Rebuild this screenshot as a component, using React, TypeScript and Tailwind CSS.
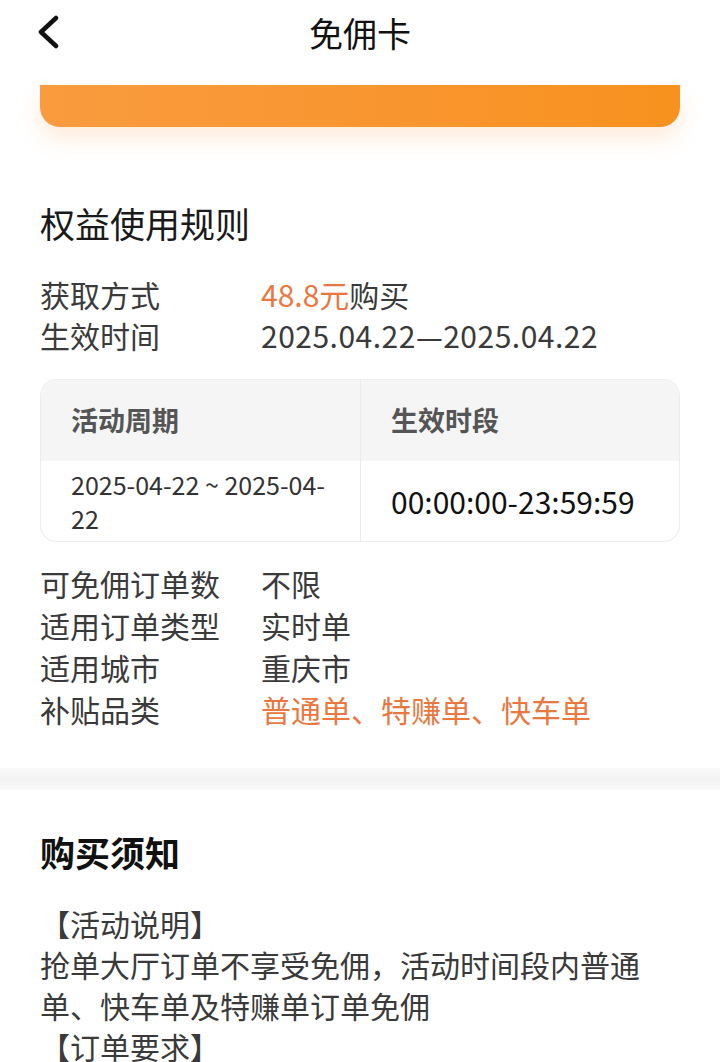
const font = { fontFamily: '"Noto Sans CJK SC", "Noto Sans", sans-serif' };

const rules: [string, string, boolean?][] = [
  ["可免佣订单数", "不限"],
  ["适用订单类型", "实时单"],
  ["适用城市", "重庆市"],
  ["补贴品类", "普通单、特赚单、快车单", true],
];

function BackIcon() {
  return (
    <svg width="28" height="34" viewBox="0 0 28 34" fill="none">
      <polyline
        points="20,3 5,17 20,31"
        stroke="#111"
        strokeWidth="4.5"
        strokeLinecap="round"
        strokeLinejoin="round"
      />
    </svg>
  );
}

export default function App() {
  return (
    <div className="w-[720px] h-[1062px] bg-white overflow-hidden" style={font}>
      {/* header */}
      <div className="relative h-[85px] flex justify-center">
        <div className="absolute left-[36px] top-[15px]">
          <BackIcon />
        </div>
        <h1 className="mt-[10px] text-[34px] leading-[46px] text-[#111]">免佣卡</h1>
      </div>

      <div className="px-10">
        <div className="h-[42px] rounded-b-[20px] bg-gradient-to-r from-[#f99b3e] to-[#f8911d] shadow-[0_12px_22px_rgba(249,150,60,0.18)]" />

        <h2 className="mt-[71px] text-[35px] leading-[49px] text-[#1a1a1a]">权益使用规则</h2>

        <div className="mt-[27px] text-[30px] leading-[41px] text-[#3a3a3a]">
          <div className="flex">
            <span className="w-[221px]">获取方式</span>
            <span>
              <span className="text-[#e8783f]">48.8元</span>购买
            </span>
          </div>
          <div className="flex">
            <span className="w-[221px]">生效时间</span>
            <span className="tracking-[0.5px]">2025.04.22—2025.04.22</span>
          </div>
        </div>

        <div className="mt-[23px] border border-[#ececec] rounded-[16px] overflow-hidden grid grid-cols-[320px_1fr]">
          <div className="h-[81px] bg-[#f5f5f5] flex items-center px-[30px] text-[27px] font-bold text-[#555] border-r border-[#ebebeb]">
            活动周期
          </div>
          <div className="h-[81px] bg-[#f5f5f5] flex items-center px-[30px] text-[27px] font-bold text-[#555]">
            生效时段
          </div>
          <div className="h-[80px] flex items-center pl-[30px] pr-[6px] text-[25px] leading-[34px] text-[#333] border-r border-[#ebebeb]">
            <span className="whitespace-nowrap">
              2025-04-22 ~ 2025-04-
              <br />
              22
            </span>
          </div>
          <div className="h-[80px] flex items-center px-[30px] text-[30px] text-[#111]">
            00:00:00-23:59:59
          </div>
        </div>

        <div className="mt-[20px] text-[30px] leading-[42px] text-[#3a3a3a]">
          {rules.map(([k, v, hl]) => (
            <div key={k} className="flex">
              <span className="w-[221px]">{k}</span>
              <span className={hl ? "text-[#e8783f]" : ""}>{v}</span>
            </div>
          ))}
        </div>
      </div>

      <div className="mt-[38px] h-[22px] bg-gradient-to-b from-[#fafafa] via-[#f3f3f3] to-[#fafafa]" />

      <div className="px-10">
        <h2 className="mt-[37px] text-[35px] leading-[49px] font-bold text-[#111]">购买须知</h2>
        <div className="mt-[27px] text-[30px] leading-[41px] text-[#3a3a3a]">
          <p>【活动说明】</p>
          <p>抢单大厅订单不享受免佣，活动时间段内普通单、快车单及特赚单订单免佣</p>
          <p>【订单要求】</p>
        </div>
      </div>
    </div>
  );
}
